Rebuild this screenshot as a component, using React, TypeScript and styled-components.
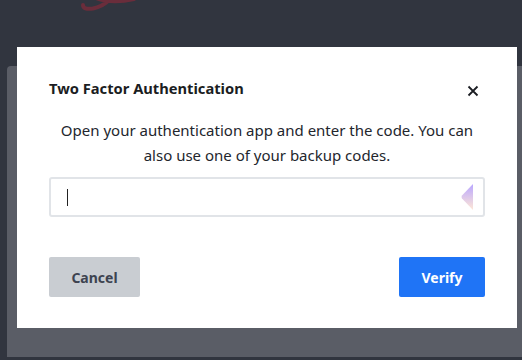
import React from 'react';
import styled, { createGlobalStyle } from 'styled-components';

const Global = createGlobalStyle`
  html, body {margin: 0;padding: 0;background: #31353f;}
  body {font-family: "Noto Sans", "Open Sans", sans-serif;overflow: hidden;}
  * {box-sizing: border-box;}
`

const Page = styled.div`
  position: relative;
  width: 522px;
  height: 360px;
  display: flex;
  flex-direction: column;
`

const Header = styled.div`
  height: 66px;
  flex-shrink: 0;
  padding-left: 80px;
  svg {display: block;}
`

const Panel = styled.div`
  margin-left: 7px;
  height: 291px;
  background: #5a5d66;
  border-top-left-radius: 4px;
`

const Modal = styled.div`
  position: absolute;
  left: 17px;
  top: 47px;
  width: 500px;
  height: 281px;
  background: #fff;
  padding: 29px 32px 0;
  display: flex;
  flex-direction: column;
`

const TitleRow = styled.div`
  display: flex;
  align-items: center;
  justify-content: space-between;
  h2 {margin: 0;font-size: 14.7px;font-weight: 700;color: #1b1d22;line-height: 24px;}
`

const Close = styled.button`
  border: none;
  background: none;
  padding: 0;
  margin-right: 6px;
  margin-top: 6px;
  width: 12px;
  height: 12px;
  display: flex;
  cursor: pointer;
`

const Text = styled.p`
  margin: 18px 0 0;
  text-align: center;
  font-size: 15px;
  line-height: 25px;
  color: #23262d;
`

const Field = styled.div`
  margin-top: 9px;
  height: 40px;
  border: 2px solid #e1e4e8;
  border-radius: 3px;
  display: flex;
  align-items: center;
  justify-content: space-between;
  padding: 0 10px 0 16px;
`

const Caret = styled.span`
  width: 1px;
  height: 17px;
  background: #222;
`

const Actions = styled.div`
  margin-top: 40px;
  display: flex;
  justify-content: space-between;
`

const Button = styled.button<{ $primary?: boolean }>`
  height: 40px;
  border: none;
  border-radius: 2px;
  font-family: "Noto Sans", sans-serif;
  font-size: 14px;
  font-weight: 700;
  padding: 0;
  width: ${p => (p.$primary ? '86px' : '91px')};
  background: ${p => (p.$primary ? '#1f74f6' : '#c9cdd2')};
  color: ${p => (p.$primary ? '#fff' : '#3d4350')};
`

export default function App() {
  return (
    <Page>
      <Global />
      <Header>
        <svg width="70" height="12" viewBox="0 0 70 12">
          <path d="M3 5 Q3 10 13 8.5 Q24 6 30 -1 M16 -2 Q32 4 54 -1" stroke="#6a2d3b" strokeWidth="4" fill="none" strokeLinecap="round" />
        </svg>
      </Header>
      <Panel />
      <Modal>
        <TitleRow>
          <h2>Two Factor Authentication</h2>
          <Close aria-label="close">
            <svg width="12" height="12" viewBox="0 0 12 12">
              <path d="M1.5 1.5 L10.5 10.5 M10.5 1.5 L1.5 10.5" stroke="#1b1d22" strokeWidth="1.8" />
            </svg>
          </Close>
        </TitleRow>
        <Text>Open your authentication app and enter the code. You can also use one of your backup codes.</Text>
        <Field>
          <Caret />
          <svg width="12" height="26" viewBox="0 0 12 26">
            <defs>
              <linearGradient id="pm" x1="0" y1="0" x2="0" y2="1">
                <stop offset="0" stopColor="#b9a6ff" />
                <stop offset="1" stopColor="#ffe7d6" />
              </linearGradient>
            </defs>
            <path d="M12 0 L12 26 L1 14.5 Q0 13 1 11.5 Z" fill="url(#pm)" />
          </svg>
        </Field>
        <Actions>
          <Button>Cancel</Button>
          <Button $primary>Verify</Button>
        </Actions>
      </Modal>
    </Page>
  );
}
